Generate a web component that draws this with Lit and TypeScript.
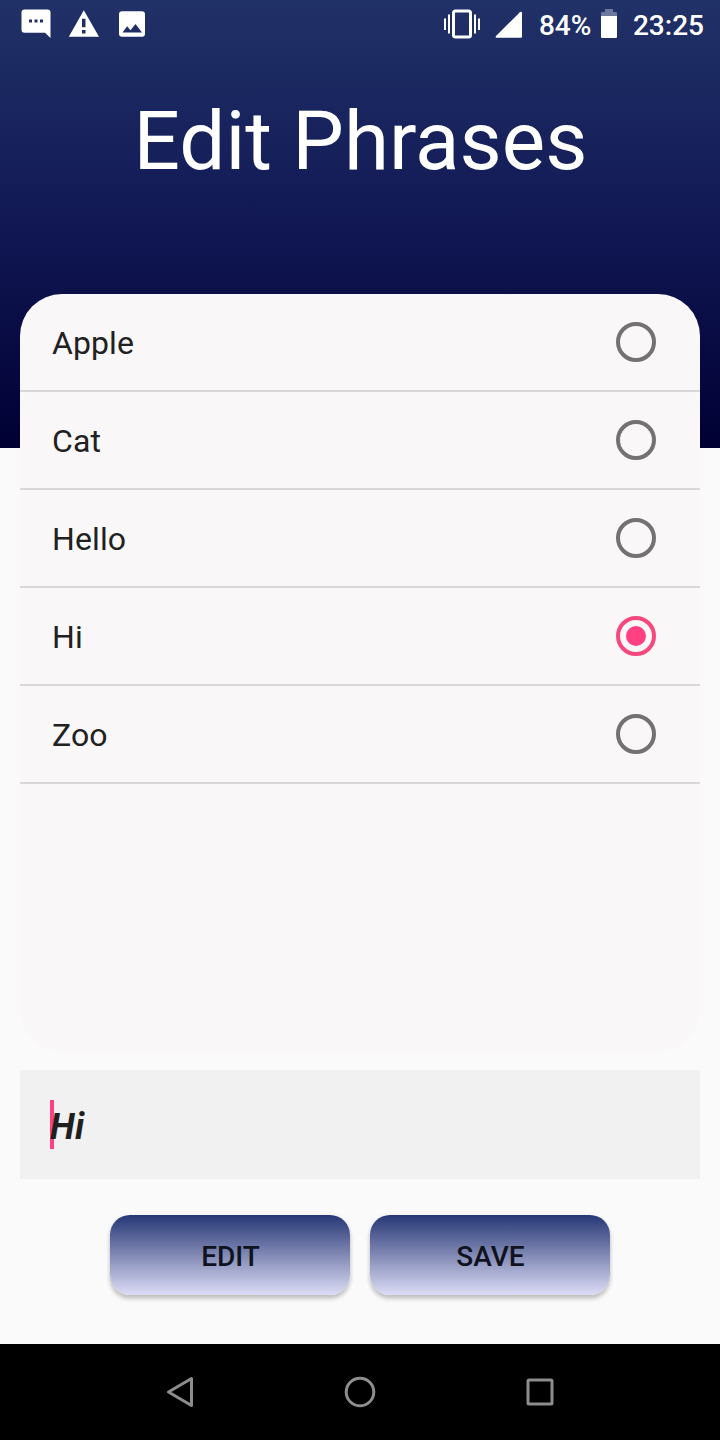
import { LitElement, html, css, svg } from "lit";
import { customElement, property, state } from "lit/decorators.js";
import { classMap } from "lit/directives/class-map.js";

@customElement("status-bar")
class StatusBar extends LitElement {
  static styles = css`
    :host { display: flex; justify-content: space-between; height: 48px; color: #fff; font: 500 28px/52px Roboto, sans-serif; }
    .group { display: flex; align-items: flex-start; }
    .left { padding-left: 20px; gap: 16px; }
    .right { padding-right: 16px; }
    svg { display: block; fill: currentColor; flex: none; }
    .signal { margin-left: 14px; }
    .percent { margin-left: 16px; width: 53px; white-space: nowrap; }
    .battery { margin-left: 8px; margin-right: 15px; }
  `;
  render() {
    return html`
      <div class="group left">
        <svg width="32" height="48" viewBox="0 0 32 48"><path fill-rule="evenodd" d="M4.500 9.500h23a3 3 0 0 1 3 3V38L25 32.700H4.500a3 3 0 0 1-3-3V12.500a3 3 0 0 1 3-3zM9 19.500v3h3v-3zM14.500 19.500v3h3v-3zM20 19.500v3h3v-3z"/></svg>
        <svg width="32" height="48" viewBox="0 0 32 48"><path fill-rule="evenodd" d="M15.800 10.300 31 36.700H.800zM14 18.800v8.400h3.500v-8.400zM14 30v3.500h3.500V30z"/></svg>
        <svg width="32" height="48" viewBox="0 0 32 48"><path fill-rule="evenodd" d="M6 11.200h20a3 3 0 0 1 3 3v19.600a3 3 0 0 1-3 3H6a3 3 0 0 1-3-3V14.200a3 3 0 0 1 3-3zM6.500 32.500h19.500L19.500 24l-5 6.200-3.400-4z"/></svg>
      </div>
      <div class="group right">
        <svg width="38" height="48" viewBox="0 0 38 48"><path d="M1 18.500h2v11.500H1zM5 14.500h2v19H5zM31 14.500h2v19h-2zM35 18.500h2v11.500h-2z"/><rect x="10.500" y="11" width="17" height="26" rx="2" fill="none" stroke="currentColor" stroke-width="3"/></svg>
        <svg class="signal" width="28" height="48" viewBox="0 0 28 48"><path d="M26 11.800a1 1 0 0 1 1 1V36.800a1 1 0 0 1-1 1H1.500Q0 37.300 1 36L25 12.200z"/></svg>
        <span class="percent">84%</span>
        <svg class="battery" width="18" height="48" viewBox="0 0 18 48"><path fill-opacity=".35" d="M5 9h8v3h3a1 1 0 0 1 1 1v3H1v-3a1 1 0 0 1 1-1h3z"/><path d="M1 16h16v21a1 1 0 0 1-1 1H2a1 1 0 0 1-1-1z"/></svg>
        <span>23:25</span>
      </div>`;
  }
}

@customElement("phrase-row")
class PhraseRow extends LitElement {
  @property() label = "";
  @property({ type: Boolean }) checked = false;
  static styles = css`
    :host { display: flex; align-items: center; justify-content: space-between; height: 96px; padding: 0 44px 0 32px; border-bottom: 2px solid #d9d7d8; font: 400 32px/38px Roboto, sans-serif; letter-spacing: .1px; color: #212121; }
    .label { padding-top: 2px; }
    .radio { display: flex; align-items: center; justify-content: center; box-sizing: border-box; width: 40px; height: 40px; border: 4px solid #737172; border-radius: 50%; }
    .radio.on { border-color: #f6497f; }
    .radio.on::after { content: ""; width: 20px; height: 20px; border-radius: 50%; background: #ff4081; }
  `;
  render() {
    return html`<span class="label">${this.label}</span><span class=${classMap({ radio: true, on: this.checked })}></span>`;
  }
}

@customElement("app-root")
class AppRoot extends LitElement {
  @state() phrases = ["Apple", "Cat", "Hello", "Hi", "Zoo"];
  @state() selected = "Hi";
  static styles = css`
    :host { display: flex; flex-direction: column; width: 720px; height: 1440px; overflow: hidden; background: linear-gradient(#213268 0, #111854 224px, #000033 448px, #fafafa 448px); font-family: Roboto, sans-serif; }
    h1 { margin: 0; height: 246px; box-sizing: border-box; padding: 45px 0 0 1px; color: #fff; text-align: center; font-weight: 400; font-size: 81.800px; line-height: 96px; }
    .list { margin: 0 20px; height: 758px; border-radius: 42px; overflow: hidden; background: #f9f7f8; flex: none; }
    .field { display: flex; align-items: center; margin: 18px 20px 0; height: 109px; box-sizing: border-box; padding-left: 30px; background: #f1f1f1; color: #1f1f1f; font: italic 700 36px/42px Roboto, sans-serif; letter-spacing: .3px; flex: none; }
    .caret { width: 4px; height: 49px; margin-right: -4px; background: #ff4081; }
    .value { padding-top: 4px; position: relative; }
    .actions { display: flex; justify-content: center; gap: 20px; margin-top: 36px; flex: 1; }
    button { width: 240px; height: 80px; padding: 4px 0 0 1px; border: 0; border-radius: 20px; background: linear-gradient(#263775, #dcdcf5); box-shadow: 0 4px 4px rgba(0, 0, 0, .2), 0 1px 5px rgba(0, 0, 0, .08); color: #10131d; font: 500 28px/34px Roboto, sans-serif; }
    nav { display: flex; justify-content: center; gap: 140px; height: 96px; align-items: center; background: #000; flex: none; }
    nav svg { display: block; fill: none; stroke: #8d8d8d; stroke-width: 3; stroke-linejoin: round; }
  `;
  render() {
    const icons = [
      svg`<path d="M8.500 20 31.500 6.500V33.500z"/>`,
      svg`<circle cx="20" cy="20" r="13.800"/>`,
      svg`<rect x="8" y="8" width="24" height="24" rx="1"/>`,
    ];
    return html`
      <status-bar></status-bar>
      <h1>Edit Phrases</h1>
      <div class="list">${this.phrases.map((p) => html`<phrase-row .label=${p} .checked=${p === this.selected}></phrase-row>`)}</div>
      <div class="field"><span class="caret"></span><span class="value">${this.selected}</span></div>
      <div class="actions"><button>EDIT</button><button>SAVE</button></div>
      <nav>${icons.map((i) => html`<svg width="40" height="40" viewBox="0 0 40 40">${i}</svg>`)}</nav>`;
  }
}
